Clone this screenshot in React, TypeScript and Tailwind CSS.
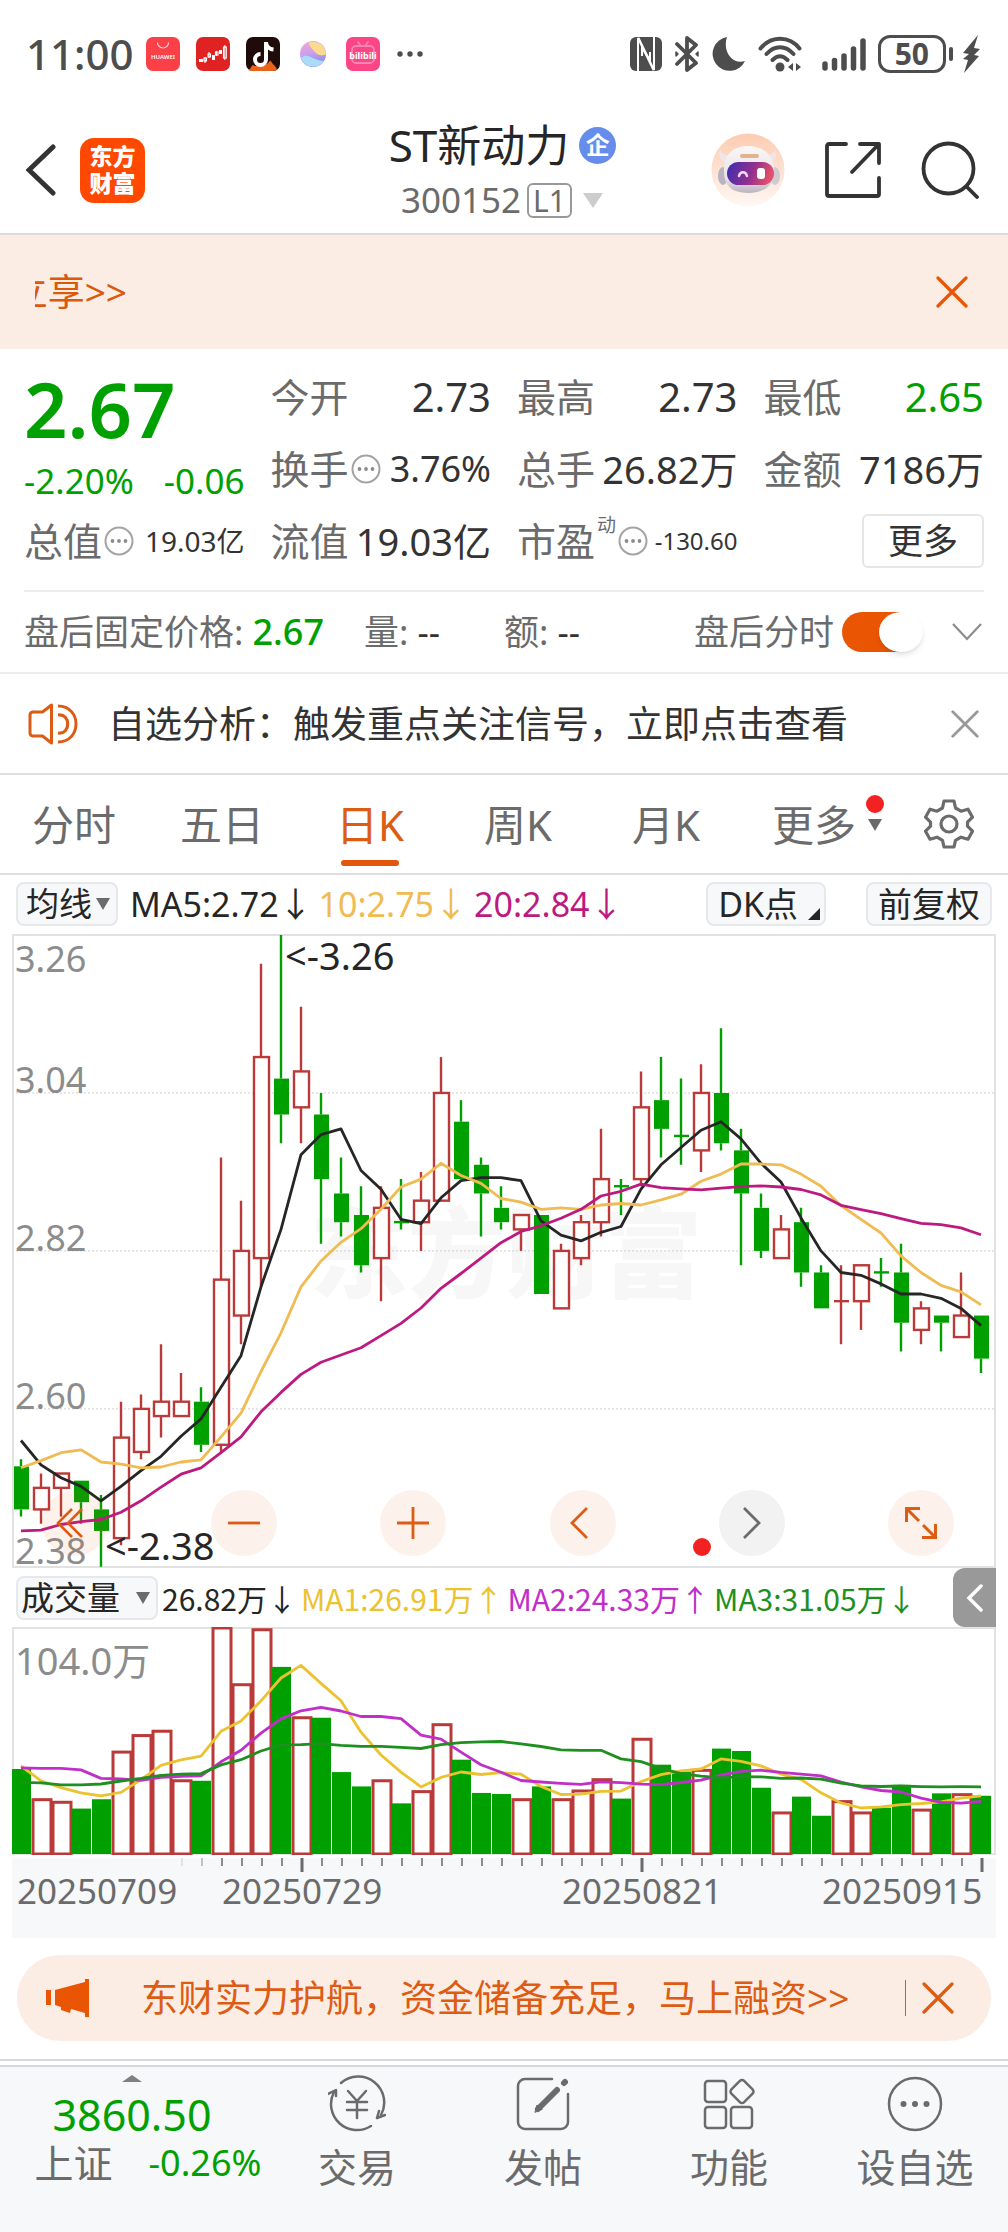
import { useState } from "react";
import type { ReactNode } from "react";

// [high, open, close, low, volume]
type Candle = [number, number, number, number, number];

const candles: Candle[] = [
    [2.53, 2.52, 2.46, 2.45, 39.1],
    [2.51, 2.46, 2.49, 2.44, 25.0],
    [2.51, 2.49, 2.51, 2.45, 23.8],
    [2.5, 2.5, 2.47, 2.44, 20.9],
    [2.48, 2.46, 2.43, 2.38, 25.2],
    [2.61, 2.42, 2.56, 2.41, 46.9],
    [2.62, 2.54, 2.6, 2.53, 54.5],
    [2.69, 2.59, 2.61, 2.56, 56.5],
    [2.65, 2.59, 2.61, 2.59, 33.7],
    [2.63, 2.61, 2.55, 2.54, 33.7],
    [2.95, 2.55, 2.78, 2.54, 104.0],
    [2.89, 2.73, 2.82, 2.69, 77.9],
    [3.22, 2.81, 3.09, 2.77, 103.2],
    [3.26, 3.06, 3.01, 2.97, 86.1],
    [3.16, 3.02, 3.07, 2.97, 62.7],
    [3.04, 3.01, 2.92, 2.83, 62.7],
    [2.95, 2.9, 2.86, 2.84, 37.7],
    [2.91, 2.87, 2.8, 2.79, 31.1],
    [2.91, 2.81, 2.88, 2.75, 33.7],
    [2.92, 2.8601, 2.86, 2.85, 23.3],
    [2.93, 2.86, 2.89, 2.82, 28.7],
    [3.09, 2.89, 3.04, 2.89, 59.5],
    [3.03, 3.0, 2.92, 2.92, 43.4],
    [2.95, 2.94, 2.9, 2.84, 28.1],
    [2.91, 2.88, 2.86, 2.85, 27.6],
    [2.87, 2.85, 2.87, 2.82, 25.0],
    [2.87, 2.87, 2.76, 2.76, 31.1],
    [2.83, 2.74, 2.82, 2.74, 25.0],
    [2.87, 2.81, 2.86, 2.8, 29.0],
    [2.99, 2.86, 2.92, 2.84, 34.2],
    [2.92, 2.9101, 2.91, 2.87, 25.5],
    [3.07, 2.92, 3.02, 2.91, 52.8],
    [3.09, 3.03, 2.99, 2.95, 41.1],
    [3.06, 2.9801, 2.98, 2.94, 37.9],
    [3.08, 2.96, 3.04, 2.93, 38.5],
    [3.13, 3.04, 2.97, 2.96, 48.5],
    [2.99, 2.96, 2.9, 2.8, 47.4],
    [2.9, 2.88, 2.82, 2.81, 30.5],
    [2.87, 2.81, 2.85, 2.81, 18.9],
    [2.88, 2.86, 2.79, 2.77, 26.4],
    [2.8, 2.79, 2.74, 2.74, 17.6],
    [2.8, 2.75, 2.75, 2.69, 24.1],
    [2.8, 2.75, 2.8, 2.71, 18.9],
    [2.81, 2.7901, 2.79, 2.77, 21.3],
    [2.83, 2.79, 2.72, 2.68, 31.8],
    [2.75, 2.71, 2.74, 2.69, 20.2],
    [2.73, 2.73, 2.72, 2.68, 27.9],
    [2.79, 2.7, 2.73, 2.7, 27.3],
    [2.73, 2.73, 2.67, 2.65, 26.8],
];

const GREEN = "#00a000";
const RED = "#b93a38";

// seed holds the averages that reach back before the first visible day
const movingAverage = (values: number[], days: number, seed: number[]) =>
    values.map((_, i) => {
        if (i < seed.length) return seed[i];
        const part = values.slice(i - days + 1, i + 1);
        return part.reduce((a, b) => a + b, 0) / days;
    });

const closes = candles.map((c) => c[2]);
const volumes = candles.map((c) => c[4]);

const priceLines = [
    { color: "#262626", values: movingAverage(closes, 5, [2.556, 2.522, 2.504, 2.492]) },
    { color: "#f0bb52", values: movingAverage(closes, 10, [2.518, 2.528, 2.539, 2.543, 2.526, 2.523, 2.518, 2.519, 2.526]) },
    {
        color: "#bd1a80",
        values: movingAverage(closes, 20, [
            2.43, 2.431, 2.439, 2.443, 2.446, 2.456, 2.472, 2.491, 2.509, 2.518, 2.539, 2.561, 2.596, 2.623, 2.648, 2.665, 2.675,
            2.685, 2.702,
        ]),
    },
];

const volumeLines = [
    { color: "#ebc22f", values: movingAverage(volumes, 5, [40.5, 33.7, 30.5, 28.1]) },
    { color: "#c030c8", values: movingAverage(volumes, 10, [39.6, 39.4, 39.4, 38.7, 34.8, 34.5, 33.9, 35.3, 35.7]) },
    {
        color: "#1f8f1f",
        values: movingAverage(volumes, 20, [
            33, 32.7, 31.8, 31.8, 32.2, 33.6, 34.8, 36.2, 36.7, 37, 41, 43.4, 47.4, 50.2, 50.3, 50.8, 50, 49.5, 49.5,
        ]),
    },
];

const xAt = (i: number) => 9 + i * 20;
const priceY = (p: number) => 1 + (3.26 - p) * 718;
const volumeY = (v: number) => 227 - (v / 104) * 226;

const toPoints = (values: number[], scale: (v: number) => number) =>
    values.map((v, i) => `${xAt(i)},${scale(v).toFixed(1)}`).join(" ");

const InfoDots = () => (
    <svg viewBox="0 0 30 30" className="size-[30px] shrink-0" fill="none">
        <circle cx="15" cy="15" r="13.5" stroke="#a3a3a3" strokeWidth="2" />
        <g fill="#8c8c8c">
            <circle cx="8.5" cy="15" r="1.9" />
            <circle cx="15" cy="15" r="1.9" />
            <circle cx="21.5" cy="15" r="1.9" />
        </g>
    </svg>
);

const Cross = ({ className }: { className: string }) => (
    <svg viewBox="0 0 32 32" className={className} fill="none" stroke="currentColor" strokeWidth="3.2" strokeLinecap="round">
        <path d="M2 2 30 30M30 2 2 30" />
    </svg>
);

const StatusBar = () => (
    <div className="flex items-center justify-between pt-[26px] pr-7 pb-[25px] pl-[26px] text-[#4d4d4d]">
        <div className="flex items-center gap-4">
            <span className="-mr-1 text-[42px] leading-[56px] font-medium">11:00</span>
            <svg viewBox="0 0 34 34" className="size-[34px]">
                <rect width="34" height="34" rx="7" fill="#fb4048" />
                <path d="M11.5 5.5a5.5 5.5 0 0 0 11 0" fill="none" stroke="#ffd5d5" strokeWidth="1.2" />
                <text x="17" y="22" textAnchor="middle" fontSize="6" fontWeight="600" fill="#fff">HUAWEI</text>
            </svg>
            <svg viewBox="0 0 34 34" className="size-[34px]">
                <rect width="34" height="34" rx="7" fill="#e02222" />
                <g fill="#fff">
                    <rect x="3" y="22" width="4" height="3" />
                    <rect x="16" y="18" width="3" height="5" />
                    <rect x="23" y="13" width="3" height="4" />
                </g>
                <g fill="none" stroke="#fff" strokeWidth="1.1">
                    <path d="M9 20v6M13 15v6M20.5 14v5M28.8 8v15" />
                    <rect x="8" y="21" width="2.5" height="3" />
                    <rect x="12" y="17" width="2.5" height="3" />
                    <rect x="19.5" y="15" width="2.5" height="3" />
                    <rect x="27.5" y="10" width="2.8" height="11" />
                </g>
            </svg>
            <svg viewBox="0 0 34 34" className="size-[34px]">
                <rect width="34" height="34" rx="7" fill="#200b0b" />
                <path d="M2 33c3-1 3-4 5-5 2 2 4 0 5 1 3-3 5 1 8-2 2 1 3-4 5-3 1 3 4 4 6 8-2 2-4 2-6 2H8c-2 0-4 0-6-1Z" fill="#e8641b" />
                <path d="M20 5v17.5a5.5 5.5 0 1 1-5.5-5.5M20 5c0 4 3 7 7.5 7.500" fill="none" stroke="#fff" strokeWidth="4" />
            </svg>
            <svg viewBox="0 0 34 34" className="size-[34px]">
                <defs>
                    <linearGradient id="orb" x1="0" y1="0" x2="0.3" y2="1">
                        <stop offset="0" stopColor="#f7a8d0" />
                        <stop offset="0.55" stopColor="#c8a0ee" />
                        <stop offset="1" stopColor="#8a8cf0" />
                    </linearGradient>
                </defs>
                <circle cx="17" cy="17" r="13" fill="url(#orb)" />
                <path d="M13 5.5A13 13 0 0 1 30 17c-4 3-9 1-12-3-2-3-5-4-5-8.5Z" fill="#fbdc8e" />
                <path d="M5 21c4-4 8-2 12 0s8 3 11 3A13 13 0 0 1 5 21Z" fill="#a9dcfa" />
            </svg>
            <svg viewBox="0 0 34 34" className="size-[34px]">
                <rect width="34" height="34" rx="7" fill="#fb4586" />
                <g fill="none" stroke="#fd86b0" strokeWidth="1.8" strokeLinecap="round">
                    <rect x="6" y="9" width="22" height="17" rx="4" />
                    <path d="m12 5 2.5 3.5M22 5l-2.5 3.5" />
                </g>
                <text x="17" y="22" textAnchor="middle" fontSize="9" fontWeight="700" fill="#fff">bilibili</text>
            </svg>
            <svg viewBox="0 0 28 8" className="h-2 w-7" fill="currentColor">
                <circle cx="4" cy="4" r="2.7" />
                <circle cx="14" cy="4" r="2.7" />
                <circle cx="24" cy="4" r="2.7" />
            </svg>
        </div>
        <div className="flex items-center gap-3">
            <svg viewBox="0 0 32 34" className="h-[34px] w-8">
                <rect width="32" height="34" rx="6" fill="currentColor" />
                <path d="M8 34V1l15.5 32M24 0v33L8.500 1" fill="none" stroke="#fff" strokeWidth="2" />
                <path d="M12 19v-8l8 12v-8" fill="none" stroke="#fff" strokeWidth="2" />
            </svg>
            <svg viewBox="0 0 26 36" className="h-9 w-[26px]" fill="none" stroke="currentColor" strokeWidth="3.8" strokeLinejoin="round" strokeLinecap="round">
                <path d="m3 8 19 19-9 7V2l9 7L3 28" />
                <path d="M2 16v4l2-2ZM24 16v4l-2-2Z" strokeWidth="1.5" fill="currentColor" />
            </svg>
            <svg viewBox="0 0 34 36" className="h-9 w-[34px]" fill="currentColor">
                <path d="M15 1a17 17 0 1 0 18 24C21 29 10 16 15 1Z" />
            </svg>
            <svg viewBox="0 0 44 36" className="h-9 w-11" fill="none" stroke="currentColor" strokeWidth="4" strokeLinecap="round">
                <path d="M2.5 12.500c10.5-13 29-13 39 0M8.500 18c8-9 19-9 27 0M14.500 24c5-5 10-5 15 0" />
                <circle cx="22" cy="31" r="4.5" fill="currentColor" stroke="none" />
                <path d="m35 27-5 4 5 4ZM38 27l5 4-5 4Z" fill="currentColor" stroke="none" />
            </svg>
            <svg viewBox="0 0 44 36" className="ml-2 h-9 w-11" fill="none" stroke="currentColor" strokeWidth="5.5" strokeLinecap="round">
                <path d="M3 28v4M12.500 24.500V32M22 20v12M31.500 13v19M41 5v27" />
            </svg>
            <div className="flex items-center gap-[3px]">
                <span className="rounded-xl border-[3px] border-current px-[14px] text-[30px] leading-[32px] font-bold">50</span>
                <span className="h-[14px] w-1 rounded-full bg-current" />
                <svg viewBox="0 0 18 38" className="ml-[6px] h-[38px] w-[18px]" fill="currentColor">
                    <path d="M16 0 1 18l6 1-6 5 5 1-4 13 15-17-5-1 6-6-6-1Z" />
                </svg>
            </div>
        </div>
    </div>
);

const Header = () => (
    <header className="grid grid-cols-[1fr_auto_1fr] items-center border-b-2 border-[#dcdcdc] pr-[29px] pl-[26px]">
        <div className="flex items-center gap-6">
            <button aria-label="返回">
                <svg viewBox="0 0 30 52" className="h-[52px] w-[30px]" fill="none" stroke="#333" strokeWidth="5" strokeLinecap="round">
                    <path d="M27 3 3 26l24 23" />
                </svg>
            </button>
            <a href="#home" className="flex size-[65px] flex-col items-center justify-center rounded-[14px] bg-[#ff4800] text-[23px] leading-[27px] font-black text-white">
                <span>东方</span>
                <span>财富</span>
            </a>
        </div>
        <div className="flex flex-col items-center pt-[10px] pb-[6px]">
            <h1 className="flex items-center gap-[10px] text-[44px] leading-[56px] text-[#262626]">
                ST新动力
                <span className="flex size-[37px] items-center justify-center rounded-full bg-[#668deb] text-[24px] leading-none font-bold text-white">企</span>
            </h1>
            <button className="flex items-center text-[35px] leading-[54px] text-[#6b6b6b]">
                300152
                <span className="ml-[6px] rounded-md border-2 border-[#999] px-1 text-[30px] leading-[31px]">L1</span>
                <svg viewBox="0 0 22 15" className="ml-[10px] h-[15px] w-[22px]" fill="#ccc">
                    <path d="M1 0h20L11 15Z" />
                </svg>
            </button>
        </div>
        <div className="flex items-center justify-end gap-10">
            <button aria-label="智能助手">
                <svg viewBox="0 0 74 74" className="size-[74px]">
                    <defs>
                        <linearGradient id="halo" x1="0" y1="0" x2="0" y2="1">
                            <stop offset="0" stopColor="#fdcbb0" />
                            <stop offset="1" stopColor="#fff8f4" />
                        </linearGradient>
                        <linearGradient id="head" x1="0" y1="0" x2="0" y2="1">
                            <stop offset="0" stopColor="#fbf7f6" />
                            <stop offset="0.7" stopColor="#e6e2e8" />
                            <stop offset="1" stopColor="#b9b4bf" />
                        </linearGradient>
                        <linearGradient id="visor" x1="0" y1="0" x2="1" y2="0.2">
                            <stop offset="0" stopColor="#3a2db0" />
                            <stop offset="0.6" stopColor="#93308f" />
                            <stop offset="1" stopColor="#e0506a" />
                        </linearGradient>
                    </defs>
                    <circle cx="37" cy="37" r="36.5" fill="url(#halo)" />
                    <path d="M9 17c-2 8 1 13 8 11l6-6c-6 1-12 0-14-5ZM64 17c2 8-1 13-8 11l-6-6c6 1 12 0 14-5Z" fill="#f0e6e5" />
                    <ellipse cx="12" cy="43" rx="5" ry="9" fill="#b9b4bf" />
                    <ellipse cx="64" cy="43" rx="5" ry="9" fill="#d0cbd3" />
                    <path d="M13 36c0-15 10-23 24-23s25 8 26 23c1 16-9 24-26 24S12 52 13 36Z" fill="url(#head)" />
                    <rect x="29" y="21" width="19" height="4" rx="2" fill="#e2b48e" />
                    <rect x="16" y="29" width="47" height="23" rx="11.5" fill="url(#visor)" />
                    <path d="M28 43c1-5 7-5 8 0" fill="none" stroke="#f3d8ff" strokeWidth="2.5" strokeLinecap="round" />
                    <rect x="46" y="35" width="8" height="11" rx="3" fill="#fff" />
                </svg>
            </button>
            <button aria-label="分享">
                <svg viewBox="0 0 56 56" className="size-14" fill="none" stroke="#333" strokeWidth="3.8" strokeLinecap="round" strokeLinejoin="round">
                    <path d="M21 2H4a2 2 0 0 0-2 2v48a2 2 0 0 0 2 2h48a2 2 0 0 0 2-2V36M35 2h19v19M53 3 27 30" />
                </svg>
            </button>
            <button aria-label="搜索">
                <svg viewBox="0 0 58 58" className="size-[58px]" fill="none" stroke="#333" strokeWidth="3.8" strokeLinecap="round">
                    <circle cx="27.5" cy="27.5" r="25" />
                    <path d="m46 46 10 10" />
                </svg>
            </button>
        </div>
    </header>
);

const TopBanner = () => (
    <div className="flex items-center justify-between bg-[#fcede4] py-[29px] pr-10 pl-[35px] text-[#d9590f]">
        <a href="#promo" className="flex w-[92px] justify-end overflow-hidden text-[37px] leading-[56px] whitespace-nowrap">立享&gt;&gt;</a>
        <button aria-label="关闭" className="text-[#ea5504]">
            <Cross className="size-8" />
        </button>
    </div>
);

const Quote = ({ label, extra, children, className }: { label: string; extra?: ReactNode; children: ReactNode; className: string }) => (
    <div className="flex items-center justify-between leading-[72px] whitespace-nowrap">
        <dt className="flex items-center gap-[2px] text-[39px] text-[#6b6b6b]">
            {label}
            {extra}
        </dt>
        <dd className={className}>{children}</dd>
    </div>
);

const QuotePanel = () => (
    <section className="px-6">
        <dl className="grid grid-cols-4 gap-x-[26px] border-b-2 border-[#ededed] pt-3 pb-[13px] text-[#333]">
            <div className="row-span-2 text-[#00a000]">
                <dd className="pt-2 text-[76px] leading-[80px] font-semibold">2.67</dd>
                <dd className="flex justify-between pt-2 text-[35px] leading-[48px]">
                    <span>-2.20%</span>
                    <span>-0.06</span>
                </dd>
            </div>
            <Quote label="今开" className="text-[40px]">2.73</Quote>
            <Quote label="最高" className="text-[40px]">2.73</Quote>
            <Quote label="最低" className="text-[40px] text-[#00a000]">2.65</Quote>
            <Quote label="换手" extra={<InfoDots />} className="text-[36px]">3.76%</Quote>
            <Quote label="总手" className="text-[38px]">26.82万</Quote>
            <Quote label="金额" className="text-[38px]">7186万</Quote>
            <Quote label="总值" extra={<InfoDots />} className="text-[28px]">19.03亿</Quote>
            <Quote label="流值" className="text-[38px]">19.03亿</Quote>
            <Quote
                label="市盈"
                extra={
                    <>
                        <sup className="-top-4 text-[19px] leading-none">动</sup>
                        <InfoDots />
                    </>
                }
                className="text-[24px]"
            >
                -130.60
            </Quote>
            <div className="flex items-center justify-end">
                <button className="rounded-md border-2 border-[#e6e6e6] px-6 text-[35px] leading-[50px]">更多</button>
            </div>
        </dl>
    </section>
);

const AfterHours = () => {
    const [on, setOn] = useState(true);
    return (
        <div className="flex items-center justify-between border-b-2 border-[#ededed] py-[13px] pr-[26px] pl-6 text-[35px] leading-[54px] text-[#6b6b6b]">
            <div className="flex items-center gap-10 whitespace-nowrap">
                <span>
                    盘后固定价格: <span className="text-[36px] font-medium text-[#00a000]">2.67</span>
                </span>
                <span>量: <span className="text-[#333]">--</span></span>
                <span className="pl-6">额: <span className="text-[#333]">--</span></span>
            </div>
            <div className="flex items-center gap-2">
                <label htmlFor="after-hours">盘后分时</label>
                <span className="relative flex h-10 w-[82px]">
                    <input
                        id="after-hours"
                        type="checkbox"
                        role="switch"
                        checked={on}
                        onChange={(e) => setOn(e.target.checked)}
                        className="peer h-10 w-[76px] appearance-none rounded-full bg-gray-300 checked:bg-[#ea5504]"
                    />
                    <span className="pointer-events-none absolute top-0 left-0 h-10 w-11 rounded-[50%] bg-white shadow-md peer-checked:left-[37px]" />
                </span>
                <button aria-label="展开" className="ml-5">
                    <svg viewBox="0 0 30 18" className="h-[18px] w-[30px]" fill="none" stroke="#8c8c8c" strokeWidth="2.2">
                        <path d="m1 1 14 15L29 1" />
                    </svg>
                </button>
            </div>
        </div>
    );
};

const Notice = () => (
    <div className="flex items-center border-b-2 border-[#dedede] py-[22px] pr-[29px] pl-7">
        <svg viewBox="0 0 50 42" className="h-[42px] w-[50px]" fill="none" stroke="#dd5c14" strokeWidth="3" strokeLinejoin="round">
            <path d="M23.5 2v38l-9-7H5a3 3 0 0 1-3-3V12a3 3 0 0 1 3-3h9.500Z" />
            <path d="M30 12c13-2 13 20 0 18" strokeWidth="3.2" />
            <path d="M30 3c24 0 24 36 0 36" />
        </svg>
        <a href="#signal" className="ml-[30px] flex-1 text-[37px] leading-[55px] whitespace-nowrap text-[#333]">自选分析：触发重点关注信号，立即点击查看</a>
        <button aria-label="关闭提示" className="text-[#999]">
            <Cross className="size-7" />
        </button>
    </div>
);

const tabs = ["分时", "五日", "日K", "周K", "月K", "更多"];

const PeriodTabs = () => {
    const [active, setActive] = useState("日K");
    return (
        <nav className="flex items-center border-b-2 border-[#dedede] pr-[34px]">
            <div className="grid flex-1 grid-cols-6">
                {tabs.map((tab) => (
                    <button
                        key={tab}
                        onClick={() => setActive(tab)}
                        className={`flex flex-col items-center pb-[7px] text-[42px] ${tab === active ? "text-[#dd5c14]" : "text-[#6b6b6b]"}`}
                    >
                        <span className="relative pt-[18px] pb-[3px] leading-[64px]">
                            {tab}
                            {tab === "更多" && (
                                <>
                                    <span className="absolute top-5 -right-7 size-[18px] rounded-full bg-[#f32222]" />
                                    <svg viewBox="0 0 14 12" className="absolute top-11 -right-[26px] h-3 w-[14px]" fill="#6b6b6b">
                                        <path d="M0 0h14L7 12Z" />
                                    </svg>
                                </>
                            )}
                        </span>
                        <span className={`h-[6px] w-[58px] rounded-full ${tab === active ? "bg-[#e2570c]" : ""}`} />
                    </button>
                ))}
            </div>
            <button aria-label="图表设置" className="ml-9">
                <svg viewBox="0 0 50 50" className="size-[50px]" fill="none" stroke="#6b6b6b" strokeWidth="3.2" strokeLinejoin="round">
                    <path d="M20 2h10l1.5 7 5.5 3.200 7-2 4.500 8-5 5v4l5 5-4.500 8-7-2-5.500 3.200L30 48H20l-1.500-6.600L13 38.200l-7 2-4.500-8 5-5v-4l-5-5 4.500-8 7 2L18.500 9Z" />
                    <circle cx="25" cy="25" r="8" />
                </svg>
            </button>
        </nav>
    );
};

const PickerBox = ({ label, value, className }: { label: string; value: string; className: string }) => (
    <div className="relative flex items-center">
        <select
            aria-label={label}
            defaultValue={value}
            className={`appearance-none rounded-lg border-2 border-[#e6e8ec] bg-[#f7f8fa] text-[33px] leading-[40px] text-[#262626] ${className}`}
        >
            <option>{value}</option>
        </select>
        <svg viewBox="0 0 14 12" className="pointer-events-none absolute right-2 h-3 w-[14px]" fill="#6b6b6b">
            <path d="M0 0h14L7 12Z" />
        </svg>
    </div>
);

const PriceLegend = () => (
    <div className="flex items-center justify-between px-4 pt-[7px] pb-2 text-[34px] leading-[44px] whitespace-nowrap">
        <div className="flex items-center gap-[6px]">
            <PickerBox label="主图指标" value="均线" className="pr-6 pl-2" />
            <span className="ml-[6px] text-[#262626]">MA5:2.72↓</span>
            <span className="text-[#f0bb52]">10:2.75↓</span>
            <span className="text-[#bd1a80]">20:2.84↓</span>
        </div>
        <div className="flex items-center gap-10 text-[#262626]">
            <button className="relative rounded-lg border-2 border-[#e6e8ec] bg-[#f7f8fa] pr-[26px] pl-[10px] leading-[40px]">
                DK点
                <svg viewBox="0 0 12 12" className="absolute right-1 bottom-1 size-3" fill="#262626">
                    <path d="M12 0v12H0Z" />
                </svg>
            </button>
            <button className="rounded-lg border-2 border-[#e6e8ec] bg-[#f7f8fa] px-[10px] leading-[40px]">前复权</button>
        </div>
    </div>
);

const axisLabels = [
    { text: "3.26", y: 38 },
    { text: "3.04", y: 159 },
    { text: "2.82", y: 317 },
    { text: "2.60", y: 475 },
    { text: "2.38", y: 630 },
];

const roundButton = "flex size-[66px] items-center justify-center rounded-full bg-[#ea5504]/8 text-[#dd5c14]";

const PriceChart = () => (
    <div className="relative mx-3">
        <svg viewBox="0 0 984 634" className="block h-auto w-full overflow-visible">
            <text x="298" y="356" fontSize="98" fontWeight="900" fill="#f7f7f7">东方财富</text>
            <g stroke="#cfcfcf" strokeDasharray="2 2">
                {[3.04, 2.82, 2.6].map((p) => (
                    <path key={p} d={`M0 ${priceY(p)}H984`} />
                ))}
            </g>
            <rect x="1" y="1" width="982" height="632" fill="none" stroke="#e2e2e2" strokeWidth="2" />
            {candles.map(([high, open, close, low], i) => {
                const x = xAt(i);
                const top = priceY(Math.max(open, close));
                const bottom = priceY(Math.min(open, close));
                const rising = close >= open;
                const color = rising ? RED : GREEN;
                return (
                    <g key={i}>
                        <path d={`M${x} ${priceY(high)}V${top}M${x} ${bottom}V${priceY(low)}`} stroke={color} strokeWidth="2.4" />
                        {bottom - top < 2 ? (
                            <path d={`M${x - 7} ${top}h15`} stroke={color} strokeWidth="2.4" />
                        ) : rising ? (
                            <rect x={x - 7} y={top} width="15" height={bottom - top} fill="#fff" stroke={color} strokeWidth="2.4" />
                        ) : (
                            <rect x={x - 7} y={top} width="15" height={bottom - top} fill={color} />
                        )}
                    </g>
                );
            })}
            {priceLines.map((line) => (
                <polyline key={line.color} points={toPoints(line.values, priceY)} fill="none" stroke={line.color} strokeWidth="2.8" strokeLinejoin="round" />
            ))}
            <g fontSize="36" fill="#8c8c8c">
                {axisLabels.map((label) => (
                    <text key={label.text} x="3" y={label.y}>{label.text}</text>
                ))}
            </g>
            <g fontSize="38" fill="#262626">
                <text x="273" y="36">&lt;-3.26</text>
                <text x="93" y="626">&lt;-2.38</text>
            </g>
        </svg>
        <div className="absolute inset-x-0 bottom-3 flex items-center justify-between pr-[42px] pl-[30px]">
            <button aria-label="最左" className={roundButton}>
                <svg viewBox="0 0 28 30" className="mr-3 h-[30px] w-7" fill="none" stroke="currentColor" strokeWidth="2.6">
                    <path d="M17 1 3 15l14 14M27 1 13 15l14 14" />
                </svg>
            </button>
            <button aria-label="缩小" className={roundButton}>
                <svg viewBox="0 0 32 32" className="size-8" stroke="currentColor" strokeWidth="2.8">
                    <path d="M0 16h32" />
                </svg>
            </button>
            <button aria-label="放大" className={roundButton}>
                <svg viewBox="0 0 32 32" className="size-8" stroke="currentColor" strokeWidth="2.8">
                    <path d="M0 16h32M16 0v32" />
                </svg>
            </button>
            <button aria-label="左移" className={roundButton}>
                <svg viewBox="0 0 18 32" className="mr-2 h-8 w-[18px]" fill="none" stroke="currentColor" strokeWidth="2.8">
                    <path d="M17 1 2 16l15 15" />
                </svg>
            </button>
            <button aria-label="右移" className="relative flex size-[66px] items-center justify-center rounded-full bg-[#f2f2f2] text-[#6b6b6b]">
                <svg viewBox="0 0 18 32" className="h-8 w-[18px]" fill="none" stroke="currentColor" strokeWidth="2.8">
                    <path d="m1 1 15 15L1 31" />
                </svg>
                <span className="absolute bottom-0 -left-[26px] size-[18px] rounded-full bg-[#f32222]" />
            </button>
            <button aria-label="全屏" className={roundButton}>
                <svg viewBox="0 0 34 34" className="size-[34px]" fill="none" stroke="currentColor" strokeWidth="3">
                    <path d="M16 2.500H2.500V16M3 3l12 12M18 31.500h13.500V18M31 31 19 19" />
                </svg>
            </button>
        </div>
    </div>
);

const VolumeLegend = () => (
    <div className="flex items-center justify-between pr-3 pl-4">
        <div className="flex items-center gap-1 font-['Noto_Sans_CJK_SC',sans-serif] text-[30px] leading-[44px] whitespace-nowrap">
            <div className="font-['Noto_Sans','Noto_Sans_CJK_SC',sans-serif]">
                <PickerBox label="副图指标" value="成交量" className="pr-9 pl-[3px]" />
            </div>
            <span className="text-[#262626]">26.82万↓</span>
            <span className="text-[#ebc22f]">MA1:26.91万↑</span>
            <span className="text-[#c030c8]">MA2:24.33万↑</span>
            <span className="text-[#1f8f1f]">MA3:31.05万↓</span>
        </div>
        <button aria-label="展开指标" className="flex h-[59px] w-[43px] items-center justify-center rounded-l-xl bg-[#999]">
            <svg viewBox="0 0 18 28" className="h-7 w-[18px]" fill="none" stroke="#fff" strokeWidth="3.5" strokeLinecap="round">
                <path d="M15 2 3 14l12 12" />
            </svg>
        </button>
    </div>
);

const dates = [
    { text: "20250709", x: 5 },
    { text: "20250729", x: 210 },
    { text: "20250821", x: 550 },
    { text: "20250915", x: 810 },
];

const VolumeChart = () => (
    <div className="mx-3">
        <svg viewBox="0 0 984 228" className="block h-auto w-full">
            <rect x="1" y="1" width="982" height="226" fill="none" stroke="#e2e2e2" strokeWidth="2" />
            {candles.map(([, open, close, , volume], i) => {
                const y = volumeY(volume);
                return close >= open ? (
                    <rect key={i} x={i * 20 + 1} y={y} width="18" height={227 - y} fill="#fff" stroke={RED} strokeWidth="3" />
                ) : (
                    <rect key={i} x={i * 20} y={y} width="19" height={227 - y} fill={GREEN} />
                );
            })}
            {volumeLines.map((line) => (
                <polyline key={line.color} points={toPoints(line.values, volumeY)} fill="none" stroke={line.color} strokeWidth="2.8" strokeLinejoin="round" />
            ))}
            <text x="3" y="48" fontSize="38" fill="#8c8c8c">104.0万</text>
        </svg>
        <svg viewBox="0 0 984 80" className="mt-[3px] block h-auto w-full bg-[#f7f8fa]">
            {candles.map((_, i) => {
                if (i < 8) return null;
                const major = i === 14 || i === 31 || i === 48;
                return (
                    <path
                        key={i}
                        d={`M${xAt(i) + 1} 0v${major ? 14 : 8}`}
                        stroke={major ? "#6b6b6b" : "#8c8c8c"}
                        strokeWidth={major ? 3 : 2}
                        opacity={i === 8 ? 0.2 : i === 9 ? 0.5 : 1}
                    />
                );
            })}
            <g fontSize="35" fill="#6b6b6b">
                {dates.map((date) => (
                    <text key={date.text} x={date.x} y="46">{date.text}</text>
                ))}
            </g>
        </svg>
    </div>
);

const BottomBanner = () => (
    <div className="mx-[17px] mt-[17px] mb-[18px] flex items-center rounded-full bg-[#fcede4] py-4 pr-[37px] pl-[29px] text-[#dd5c14]">
        <svg viewBox="0 0 44 38" className="h-[38px] w-11" fill="#ea5504">
            <path d="M0 11h5v15H0ZM9 11 39 3V0h4v38h-4v-4l-14-4-1 4-9-3v-3l-6-2Z" />
        </svg>
        <a href="#margin" className="ml-[51px] flex-1 text-[37px] leading-[54px] whitespace-nowrap">东财实力护航，资金储备充足，马上融资&gt;&gt;</a>
        <span className="mr-4 h-9 w-px bg-[#c4622c]" />
        <button aria-label="关闭广告">
            <Cross className="size-8" />
        </button>
    </div>
);

const navItems = [
    {
        label: "交易",
        icon: (
            <>
                <path d="M13 8A26 26 0 0 1 53 40M43 51A26 26 0 0 1 6 17" />
                <path d="m0 19 8-4 0 6M51 36l-2 7 8-3" />
                <path d="m20 16 9 10 9-10M29 26v17M19 27h20M19 35h20" />
            </>
        ),
    },
    {
        label: "发帖",
        icon: (
            <>
                <path d="M38 4H11a7 7 0 0 0-7 7v36a7 7 0 0 0 7 7h36a7 7 0 0 0 7-7V19" />
                <path d="m24 34 19-19" strokeWidth="6" />
                <path d="m50 8 1-1" strokeWidth="6" strokeLinecap="round" />
                <path d="m21 37 2-7 5 4Z" fill="#6b6b6b" strokeWidth="1" />
            </>
        ),
    },
    {
        label: "功能",
        icon: (
            <>
                <rect x="5" y="6" width="21" height="21" rx="3" />
                <rect x="5" y="32" width="21" height="21" rx="3" />
                <rect x="31" y="32" width="21" height="21" rx="3" />
                <rect x="33" y="7.5" width="18" height="18" rx="3" transform="rotate(45 42 16.5)" />
            </>
        ),
    },
    {
        label: "设自选",
        icon: (
            <>
                <circle cx="29" cy="29" r="26" />
                <g fill="#6b6b6b" stroke="none">
                    <circle cx="17.5" cy="29" r="3" />
                    <circle cx="29" cy="29" r="3" />
                    <circle cx="40.5" cy="29" r="3" />
                </g>
            </>
        ),
    },
];

const BottomNav = () => (
    <footer className="flex flex-1 flex-col border-t-2 border-[#d6d7dc] pt-1">
        <div className="flex flex-1 items-start border-t-2 border-[#d6d7dc] bg-[#f7f8fa]">
            <a href="#index" className="flex w-[264px] flex-col items-center pt-2">
                <svg viewBox="0 0 20 7" className="h-[7px] w-5" fill="#808080">
                    <path d="M10 0 20 7H0Z" />
                </svg>
                <span className="pt-2 text-[43px] leading-[50px] text-[#00a000]">3860.50</span>
                <span className="flex items-center gap-9 pl-8 text-[39px] leading-[46px] text-[#6b6b6b]">
                    上证
                    <span className="text-[36px] text-[#00a000]">-0.26%</span>
                </span>
            </a>
            <nav className="grid flex-1 grid-cols-4">
                {navItems.map((item) => (
                    <a key={item.label} href="#" className="flex flex-col items-center pt-2 text-[39px] leading-[60px] text-[#6b6b6b]">
                        <svg viewBox="0 0 58 58" className="size-[58px]" fill="none" stroke="#6b6b6b" strokeWidth="2.5" strokeLinecap="round" strokeLinejoin="round">
                            {item.icon}
                        </svg>
                        <span className="pt-1">{item.label}</span>
                    </a>
                ))}
            </nav>
        </div>
    </footer>
);

const App = () => (
    <main lang="zh-CN" className="flex min-h-screen w-full flex-col bg-white font-['Noto_Sans','Noto_Sans_CJK_SC',sans-serif]">
        <StatusBar />
        <Header />
        <TopBanner />
        <QuotePanel />
        <AfterHours />
        <Notice />
        <PeriodTabs />
        <PriceLegend />
        <PriceChart />
        <VolumeLegend />
        <VolumeChart />
        <BottomBanner />
        <BottomNav />
    </main>
);

export default App;
